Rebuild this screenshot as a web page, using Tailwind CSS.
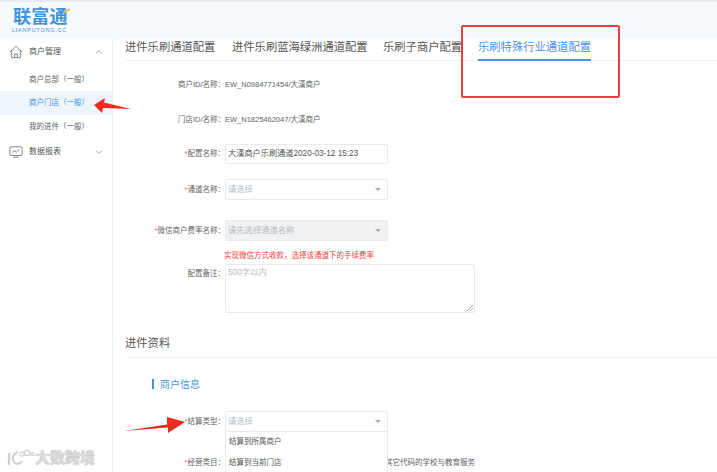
<!DOCTYPE html>
<html lang="zh">
<head>
    <meta charset="UTF-8">
    <title>商户门店</title>
    <script src="https://cdn.jsdelivr.net/npm/@tailwindcss/browser@4"></script>
</head>
<body class="relative w-[717px] h-[472px] overflow-hidden bg-white font-['Liberation_Sans','Noto_Sans_CJK_SC',sans-serif] text-[#606266]">
    <!-- Header -->
    <header class="h-[39px] border-t-2 border-[#e8ecf0] bg-[#f6fafe] pl-[13px] pt-[6px]">
        <div class="relative w-[56px]">
            <div class="text-[18px] leading-[19px] font-bold tracking-[0.2px] text-[#3f92e0] whitespace-nowrap">联富通</div>
            <div class="text-[5.5px] leading-[7px] tracking-[0.75px] text-[#4a90d0] whitespace-nowrap -ml-[1px]">LIANPUTONG.CC</div>
            <span class="absolute right-[-1px] top-[2px] w-[7px] h-[2px] bg-[#f0b040] -rotate-[30deg]"></span>
        </div>
    </header>

    <div class="flex h-[433px]">
        <!-- Sidebar -->
        <aside class="w-[113px] shrink-0 border-r border-[#eef0f3] text-[7.5px]">
            <div class="flex items-center h-[26px] pl-[9px] pr-[9px] text-[8px] text-[#555]">
                <svg class="w-[14px] h-[14px] mr-[6px]" viewBox="0 0 16 16" fill="none" stroke="#666" stroke-width="0.9"><path d="M1 8 L8 1.5 L15 8 M3 6.5 V14.5 H13 V6.5 M6.5 14.5 V10 H9.5 V14.5"/></svg>
                <span class="flex-1">商户管理</span>
                <svg class="w-[8px] h-[8px]" viewBox="0 0 8 8" fill="none" stroke="#888" stroke-width="0.8"><path d="M1 5.5 L4 2.5 L7 5.5"/></svg>
            </div>
            <div class="h-[23px] mt-[3px] pl-[29px] leading-[23px]">商户总部（一般）</div>
            <div class="h-[24px] pl-[29px] leading-[24px] bg-[#edf5fd] text-[#4a94e4]">商户门店（一般）</div>
            <div class="h-[23px] pl-[29px] leading-[23px]">我的进件（一般）</div>
            <div class="flex items-center h-[26px] mt-[1px] pl-[9px] pr-[9px] text-[8px] text-[#555]">
                <svg class="w-[14px] h-[14px] mr-[6px]" viewBox="0 0 16 16" fill="none" stroke="#666" stroke-width="0.9"><rect x="1" y="2" width="14" height="10" rx="1"/><path d="M3.5 8.5 L6 6.5 L8.5 8 L12 5 M5 14 H11"/></svg>
                <span class="flex-1">数据报表</span>
                <svg class="w-[8px] h-[8px]" viewBox="0 0 8 8" fill="none" stroke="#888" stroke-width="0.8"><path d="M1 2.5 L4 5.5 L7 2.5"/></svg>
            </div>
        </aside>

        <!-- Main -->
        <main class="flex-1 min-w-0 pl-[11px] text-[7.5px]">
            <nav class="flex h-[22px] ml-[1px] border-b border-[#eff1f4] text-[11.3px] leading-[16px] text-[#555] whitespace-nowrap">
                <span class="w-[107px]">进件乐刷通道配置</span>
                <span class="w-[151px]">进件乐刷蓝海绿洲通道配置</span>
                <span class="w-[95px]">乐刷子商户配置</span>
                <span class="h-[22px] border-b-2 border-[#4a94e4] text-[#4a94e4]">乐刷特殊行业通道配置</span>
            </nav>

            <div class="flex items-center h-[12px] mt-[18px]">
                <label class="w-[101px] text-right text-[#666]">商户ID/名称：</label>
                <span>EW_N0984771454/大漢商户</span>
            </div>
            <div class="flex items-center h-[12px] mt-[23px]">
                <label class="w-[101px] text-right text-[#666]">门店ID/名称：</label>
                <span>EW_N1825462047/大漢商户</span>
            </div>

            <div class="flex items-center h-[20px] mt-[18px]">
                <label class="w-[101px] text-right text-[#666]"><span class="text-[#f56c6c]">*</span>配置名称：</label>
                <div class="w-[163px] h-[20px] flex items-center px-[2px] bg-white border border-[#e8eaee] rounded-[2px] text-[8.2px] text-[#555]">大漢商户乐刷通道2020-03-12 15:23</div>
            </div>
            <div class="flex items-center h-[21px] mt-[15px]">
                <label class="w-[101px] text-right text-[#666]"><span class="text-[#f56c6c]">*</span>通道名称：</label>
                <div class="w-[163px] h-[21px] flex items-center justify-between px-[2px] pr-[6px] bg-white border border-[#e8eaee] rounded-[2px] text-[8.3px] text-[#b4bac4]">请选择<span class="border-x-[3px] border-t-[3px] border-x-transparent border-t-[#aaa]"></span></div>
            </div>
            <div class="flex items-center h-[21px] mt-[20px]">
                <label class="w-[101px] text-right text-[#666]"><span class="text-[#f56c6c]">*</span>微信商户费率名称：</label>
                <div class="w-[163px] h-[21px] flex items-center justify-between px-[2px] pr-[6px] bg-[#f0f1f3] border border-[#e8eaee] rounded-[2px] text-[8.3px] text-[#b4bac4]">请先选择通道名称<span class="border-x-[3px] border-t-[3px] border-x-transparent border-t-[#aaa]"></span></div>
            </div>
            <p class="ml-[100px] mt-[9px] h-[11px] leading-[11px] text-[#f04040]">实现微信方式收款，选择该通道下的手续费率</p>
            <div class="flex mt-[3px]">
                <label class="w-[101px] pt-[4px] text-right text-[#666]">配置备注：</label>
                <div class="relative w-[250px] h-[49px] px-[2px] py-[1px] bg-white border border-[#e8eaee] rounded-[2px] text-[8.3px] text-[#b4bac4]">
                    500字以内
                    <svg class="absolute right-[1px] bottom-[1px] w-[6px] h-[6px]" viewBox="0 0 6 6" stroke="#777" stroke-width="0.6"><path d="M0 6 L6 0 M3 6 L6 3"/></svg>
                </div>
            </div>

            <h2 class="mt-[22px] h-[23px] ml-[1px] border-b border-[#eff1f4] text-[11.3px] leading-[16px] text-[#555]">进件资料</h2>

            <div class="flex items-center mt-[20px] ml-[28px] h-[12px]">
                <span class="w-[2px] h-[10px] bg-[#4a94e4] mr-[6px]"></span>
                <span class="text-[10px] text-[#4a94e4]">商户信息</span>
            </div>

            <div class="flex items-center h-[21px] mt-[21px]">
                <label class="w-[101px] text-right text-[#666]"><span class="text-[#f56c6c]">*</span>结算类型：</label>
                <div class="w-[163px] h-[21px] flex items-center justify-between px-[2px] pr-[6px] bg-white border border-[#e8eaee] rounded-t-[2px] text-[8.3px] text-[#b4bac4]">请选择<span class="border-x-[3px] border-t-[3px] border-x-transparent border-t-[#aaa]"></span></div>
            </div>
            <div class="flex">
                <div class="w-[101px] text-right text-[#666] pt-[25px]"><span class="text-[#f56c6c]">*</span>经营类目：</div>
                <ul class="relative z-10 w-[163px] bg-white border-x border-[#e8eaee] text-[#555] shrink-0">
                    <li class="h-[20px] leading-[20px] pl-[3px]">结算到所属商户</li>
                    <li class="h-[21px] leading-[21px] pl-[3px]">结算到当前门店</li>
                </ul>
                <div class="pt-[25px] -ml-[3px] whitespace-nowrap">其它代码的学校与教育服务</div>
            </div>
        </main>
    </div>

    <!-- Annotations over the screenshot -->
    <div class="absolute left-[461px] top-[25px] w-[159px] h-[73px] border-2 border-[#e8403f] rounded-[2px]"></div>
    <svg class="absolute left-[92px] top-[97px] w-[40px] h-[18px]" viewBox="0 0 40 18"><path d="M2 8 L13 1 L12 5.5 L39 12 L11 11 L10 16 Z" fill="#f5281e"/></svg>
    <svg class="absolute left-[122px] top-[412px] w-[66px] h-[24px]" viewBox="0 0 66 24"><path d="M2 19 L45 12.5 L45 5 L63 10 L46 21 L46 15.5 Z" fill="#f5281e"/></svg>

    <!-- Watermark -->
    <div class="absolute left-[7px] top-[449px] flex items-center [text-shadow:0_0_1px_#888]">
        <svg class="w-[27px] h-[18px]" viewBox="0 0 27 18" fill="none" stroke="#d0d0d0" stroke-width="2.2"><path d="M2 4 V16 M11 3 C5 5 5 10 7 13 C9 16 13 15 15 12"/><circle cx="15" cy="5" r="2.2" stroke-width="1.2"/><circle cx="20" cy="4" r="2.6" stroke-width="1.2"/><circle cx="25" cy="5" r="1.6" stroke-width="1.2"/></svg>
        <span class="ml-[1px] text-[15px] font-bold leading-[18px] text-[#dedede]">大数跨境</span>
    </div>
</body>
</html>
